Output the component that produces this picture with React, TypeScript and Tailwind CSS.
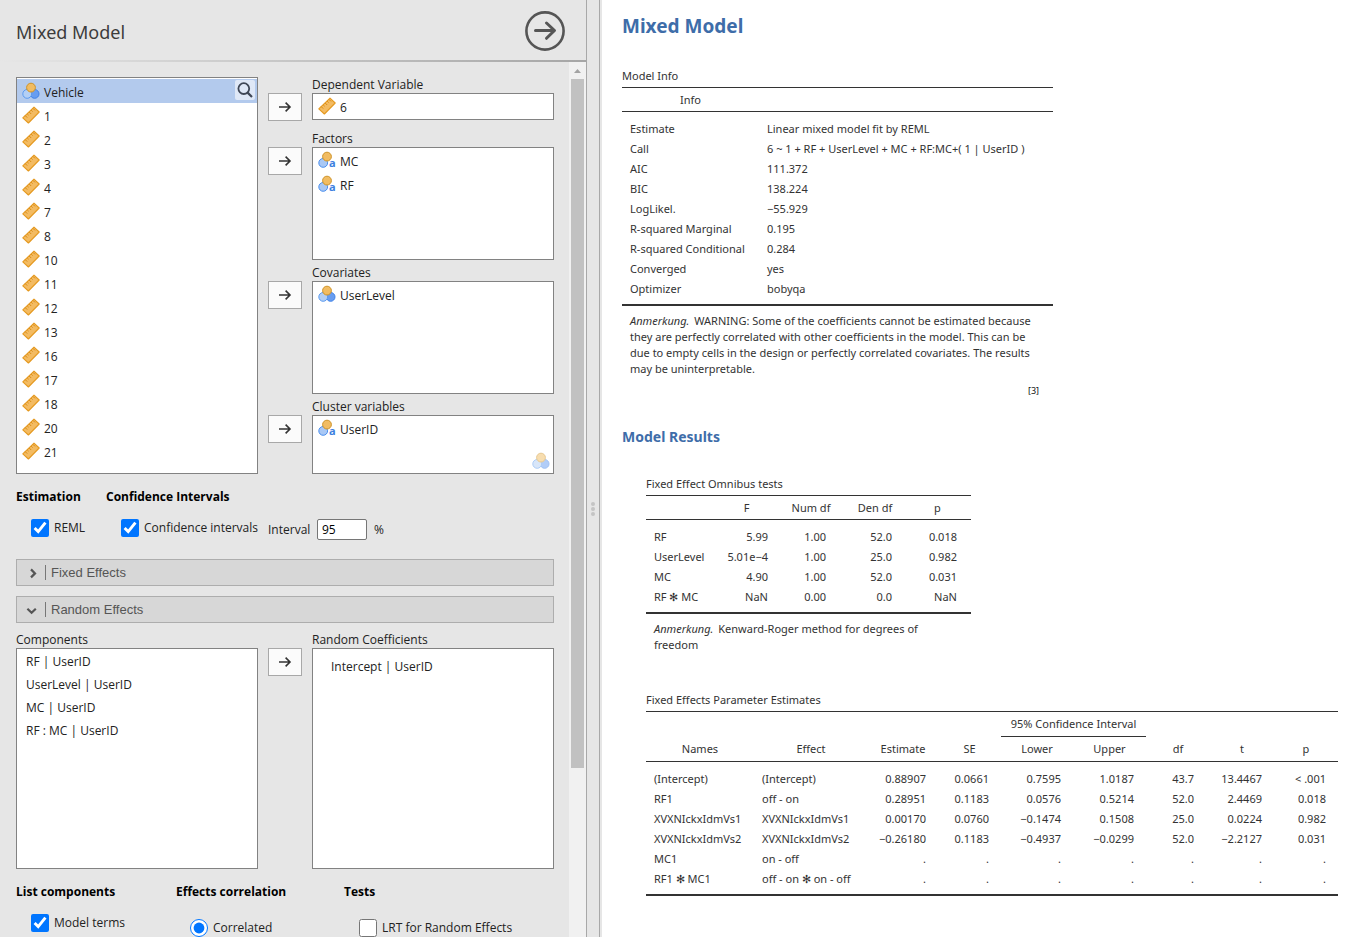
import React from 'react';
import clsx from 'clsx';

type VariableKind = 'continuous' | 'nominal' | 'nominalText';

interface Variable {
  name: string;
  kind: VariableKind;
}

const VARIABLES: Variable[] = [
  { name: 'Vehicle', kind: 'nominal' },
  ...['1', '2', '3', '4', '7', '8', '10', '11', '12', '13', '16', '17', '18', '20', '21'].map(
    (name): Variable => ({ name, kind: 'continuous' }),
  ),
];

const COMPONENTS = ['RF | UserID', 'UserLevel | UserID', 'MC | UserID', 'RF : MC | UserID'];

const MODEL_INFO = [
  ['Estimate', 'Linear mixed model fit by REML'],
  ['Call', '6 ~ 1 + RF + UserLevel + MC + RF:MC+( 1 | UserID )'],
  ['AIC', '111.372'],
  ['BIC', '138.224'],
  ['LogLikel.', '−55.929'],
  ['R-squared Marginal', '0.195'],
  ['R-squared Conditional', '0.284'],
  ['Converged', 'yes'],
  ['Optimizer', 'bobyqa'],
];

const OMNIBUS = [
  ['RF', '5.99', '1.00', '52.0', '0.018'],
  ['UserLevel', '5.01e−4', '1.00', '25.0', '0.982'],
  ['MC', '4.90', '1.00', '52.0', '0.031'],
  ['RF ✻ MC', 'NaN', '0.00', '0.0', 'NaN'],
];

const OMNIBUS_CELLS = ['pl-2', 'pr-2 text-right', 'pr-5 text-right', 'pr-3 text-right', 'pr-3.5 text-right'];

const ESTIMATES = [
  ['(Intercept)', '(Intercept)', '0.88907', '0.0661', '0.7595', '1.0187', '43.7', '13.4467', '< .001'],
  ['RF1', 'off - on', '0.28951', '0.1183', '0.0576', '0.5214', '52.0', '2.4469', '0.018'],
  ['XVXNIckxIdmVs1', 'XVXNIckxIdmVs1', '0.00170', '0.0760', '−0.1474', '0.1508', '25.0', '0.0224', '0.982'],
  ['XVXNIckxIdmVs2', 'XVXNIckxIdmVs2', '−0.26180', '0.1183', '−0.4937', '−0.0299', '52.0', '−2.2127', '0.031'],
  ['MC1', 'on - off', '.', '.', '.', '.', '.', '.', '.'],
  ['RF1 ✻ MC1', 'off - on ✻ on - off', '.', '.', '.', '.', '.', '.', '.'],
];

const ESTIMATE_CELLS = [
  'pl-2',
  'pl-2',
  'pr-3 text-right',
  'pr-3 text-right',
  'pr-3 text-right',
  'pr-3 text-right',
  'pr-4 text-right',
  'pr-3 text-right',
  'pr-3 text-right',
];

const RulerIcon = () => (
  <svg width="18" height="18" viewBox="0 0 18 18" className="shrink-0">
    <path d="M.8 11.8 L12 1.2 L17.2 6 L6.4 17 Z" fill="#f3bb62" stroke="#e5991f" strokeWidth="1.1" strokeLinejoin="round" />
    <path
      d="M3.2 9.6l2 2M5.2 7.8l1.4 1.4M7.2 6l2 2M9.2 4.2l1.4 1.4M11 2.4l2 2"
      stroke="#d98b14"
      strokeWidth="1"
      fill="none"
    />
  </svg>
);

const NominalIcon = ({ faded = false }: { faded?: boolean }) => (
  <svg width="18" height="18" viewBox="0 0 18 18" className={clsx('shrink-0', faded && 'opacity-50')}>
    <circle cx="12.6" cy="11.9" r="4.4" fill="#689df0" stroke="#3f82e8" />
    <circle cx="5.2" cy="11.9" r="4.4" fill="#b3cff5" stroke="#5a9af0" />
    <circle cx="9" cy="5.6" r="4.4" fill="#f1bc62" stroke="#cf9327" />
  </svg>
);

const NominalTextIcon = () => (
  <svg width="18" height="18" viewBox="0 0 18 18" className="shrink-0">
    <circle cx="5.2" cy="11.9" r="4.4" fill="#a9c8f5" stroke="#4a8fee" />
    <circle cx="9" cy="5.6" r="4.4" fill="#f1bc62" stroke="#cf9327" />
    <text x="11" y="16" fontSize="11" fontWeight="700" fontFamily="Open Sans, sans-serif" fill="#3d7fe0">
      a
    </text>
  </svg>
);

const VariableIcon = ({ kind }: { kind: VariableKind }) => {
  if (kind === 'continuous') return <RulerIcon />;
  if (kind === 'nominal') return <NominalIcon />;
  return <NominalTextIcon />;
};

const VariableRow = ({ name, kind, selected = false }: Variable & { selected?: boolean }) => (
  <li className={clsx('flex h-6 items-center gap-1 pl-[5px]', selected && 'bg-[#b3caed]')}>
    <VariableIcon kind={kind} />
    <span className="pt-1 leading-5">{name}</span>
  </li>
);

const AssignButton = ({ label }: { label: string }) => (
  <button
    type="button"
    aria-label={label}
    className="flex h-7 w-[34px] shrink-0 items-center justify-center border border-[#a8a8a8] bg-[#fbfbfb] text-[#333]"
  >
    <svg width="14" height="12" viewBox="0 0 14 12" fill="none" stroke="currentColor" strokeWidth="1.6">
      <path d="M1 6h11M7.6 1.6L12 6l-4.4 4.4" />
    </svg>
  </button>
);

interface TargetProps {
  title: string;
  variables: Variable[];
  boxClass: string;
  hint?: boolean;
}

const Target = ({ title, variables, boxClass, hint }: TargetProps) => (
  <div className="flex gap-[10px]">
    <div className="pt-4">
      <AssignButton label={`Move to ${title}`} />
    </div>
    <div className="min-w-0 flex-1">
      <h3 className="h-4 leading-4">{title}</h3>
      <ul className={clsx('relative border border-[#828282] bg-white', boxClass)}>
        {variables.map((variable) => (
          <VariableRow key={variable.name} {...variable} />
        ))}
        {hint && (
          <li className="absolute right-[3px] bottom-[3px]">
            <NominalIcon faded />
          </li>
        )}
      </ul>
    </div>
  </div>
);

const CheckOption = ({ label, checked = false }: { label: string; checked?: boolean }) => (
  <label className="flex items-center gap-[5px]">
    <input type="checkbox" defaultChecked={checked} className="m-0 size-[18px] accent-[#0075ff]" />
    {label}
  </label>
);

const CollapseBar = ({ title, open = false }: { title: string; open?: boolean }) => (
  <button
    type="button"
    aria-expanded={open}
    className="flex h-[27px] w-full items-center border border-[#adadad] bg-[#d7d7d7] pl-2 font-['Liberation_Sans',Arial,sans-serif] text-[13px] text-[#555]"
  >
    <svg width="14" height="12" viewBox="0 0 14 12" fill="none" stroke="#555" strokeWidth="2.2">
      {open ? <path d="M2.4 4.8l4.2 4L10.8 4.8" /> : <path d="M6 2.4l4 4L6 10.4" />}
    </svg>
    <span className="ml-1.5 h-[15px] border-l border-[#777] pl-[5px] leading-[15px]">{title}</span>
  </button>
);

const OptionsPanel = () => (
  <section className="flex w-[586px] shrink-0 flex-col bg-[#e6e6e6] text-[12px] text-[#222]">
    <header className="flex h-[60px] shrink-0 items-center justify-between pt-0.5 pr-[21px] pl-4">
      <h1 className="pt-0.5 font-['Noto_Sans',sans-serif] text-[18px] text-[#3c3c3c]">Mixed Model</h1>
      <button type="button" aria-label="Hide options" className="text-[#555]">
        <svg width="40" height="40" viewBox="0 0 40 40" fill="none" stroke="currentColor" strokeWidth="2.6">
          <circle cx="20" cy="20" r="18.6" />
          <path d="M10.5 19.5H29M21.5 12l8 7.5-8 7.8" strokeWidth="3" strokeLinecap="round" strokeLinejoin="round" />
        </svg>
      </button>
    </header>
    <div className="h-0.5 shrink-0 bg-linear-to-r from-[#e6e6e6] to-[#a6a6a6]" />

    <div className="flex min-h-0 flex-1">
      <div className="min-w-0 flex-1 overflow-hidden pt-[15px] pr-[15px] pl-4">
        <div className="flex gap-[10px]">
          <div className="relative min-w-0 flex-1 border border-[#828282] bg-white pt-px">
            <ul>
              {VARIABLES.map((variable, i) => (
                <VariableRow key={variable.name} {...variable} selected={i === 0} />
              ))}
            </ul>
            <button
              type="button"
              aria-label="Search variables"
              className="absolute top-0.5 right-0.5 flex size-5 items-center justify-center rounded-xs bg-[#dfe8f7]"
            >
              <svg width="16" height="16" viewBox="0 0 16 16" fill="none" stroke="#3f4756" strokeWidth="1.8">
                <circle cx="6.8" cy="6.6" r="5.4" />
                <path d="M10.6 10.6L15 15" strokeWidth="2.2" />
              </svg>
            </button>
          </div>
          <div className="w-[286px] shrink-0">
            <Target title="Dependent Variable" variables={[{ name: '6', kind: 'continuous' }]} boxClass="h-[27px]" />
            <div className="mt-[10px]">
              <Target
                title="Factors"
                variables={[
                  { name: 'MC', kind: 'nominalText' },
                  { name: 'RF', kind: 'nominalText' },
                ]}
                boxClass="h-[113px]"
              />
            </div>
            <div className="mt-[5px]">
              <Target title="Covariates" variables={[{ name: 'UserLevel', kind: 'nominal' }]} boxClass="h-[113px]" />
            </div>
            <div className="mt-[5px]">
              <Target
                title="Cluster variables"
                variables={[{ name: 'UserID', kind: 'nominalText' }]}
                boxClass="h-[59px]"
                hint
              />
            </div>
          </div>
        </div>

        <div className="mt-[13px] flex">
          <div className="w-[90px]">
            <h3 className="leading-5 font-bold text-black">Estimation</h3>
            <div className="mt-3 pl-[15px]">
              <CheckOption label="REML" checked />
            </div>
          </div>
          <div>
            <h3 className="leading-5 font-bold text-black">Confidence Intervals</h3>
            <div className="mt-3 flex items-start pl-[15px]">
              <div className="w-[147px]">
                <CheckOption label="Confidence intervals" checked />
              </div>
              <label className="flex items-center">
                <span className="w-[49px]">Interval</span>
                <input
                  type="text"
                  defaultValue="95"
                  className="h-[21px] w-[50px] rounded-xs border border-[#767676] bg-white px-1 text-black"
                />
                <span className="ml-[7px]">%</span>
              </label>
            </div>
          </div>
        </div>

        <div className="mt-[19px] flex flex-col gap-[10px]">
          <CollapseBar title="Fixed Effects" />
          <CollapseBar title="Random Effects" open />
        </div>

        <div className="mt-[9px] flex gap-[10px]">
          <div className="min-w-0 flex-1">
            <h3 className="h-4 leading-4">Components</h3>
            <ul className="h-[221px] border border-[#828282] bg-white pt-px pl-[9px]">
              {COMPONENTS.map((component) => (
                <li key={component} className="h-[23px] leading-[23px]">
                  {component}
                </li>
              ))}
            </ul>
          </div>
          <div className="pt-4">
            <AssignButton label="Move to Random Coefficients" />
          </div>
          <div className="min-w-0 flex-1">
            <h3 className="h-4 leading-4">Random Coefficients</h3>
            <ul className="h-[221px] border border-[#828282] bg-white pt-1.5 pl-[18px]">
              <li className="h-[23px] leading-[23px]">Intercept | UserID</li>
            </ul>
          </div>
        </div>

        <div className="mt-[13px] flex">
          <div className="w-40">
            <h3 className="leading-5 font-bold text-black">List components</h3>
            <div className="mt-3 pl-[15px]">
              <CheckOption label="Model terms" checked />
            </div>
          </div>
          <div className="w-[168px]">
            <h3 className="leading-5 font-bold text-black">Effects correlation</h3>
            <label className="mt-[17px] flex items-center gap-[5px] pl-[14px]">
              <input type="radio" name="correlation" defaultChecked className="m-0 size-[18px] accent-[#0075ff]" />
              Correlated
            </label>
          </div>
          <div>
            <h3 className="leading-5 font-bold text-black">Tests</h3>
            <div className="mt-[17px] pl-[15px]">
              <CheckOption label="LRT for Random Effects" />
            </div>
          </div>
        </div>
      </div>

      <div className="flex w-[17px] shrink-0 flex-col items-center bg-[#f1f1f1]">
        <svg width="17" height="17" viewBox="0 0 17 17" className="shrink-0">
          <path d="M5 11l3.5-4 3.5 4z" fill="#a3a3a3" />
        </svg>
        <div className="h-[689px] w-[13px] bg-[#c1c1c1]" />
      </div>
    </div>
  </section>
);

const Splitter = () => (
  <div className="flex w-4 shrink-0 border-r-2 border-[#e6e6e6] bg-[#e6e6e6]">
    <div className="flex flex-1 flex-col items-center justify-center gap-px border-x border-[#a8a8a8] pt-20">
      <span className="size-1 rounded-full bg-[#c4c4c4]" />
      <span className="size-1 rounded-full bg-[#c4c4c4]" />
      <span className="size-1 rounded-full bg-[#c4c4c4]" />
    </div>
  </div>
);

const TABLE = 'table-fixed border-separate border-spacing-0 border-t border-[#333]';
const HEAD_CELL = 'h-6 border-b border-[#333] p-0 text-center font-normal';
const BODY =
  '[&>tr:first-child>td]:pt-[7px] [&>tr:last-child>td]:border-b-2 [&>tr:last-child>td]:border-[#333] [&>tr:last-child>td]:pb-[5px]';

const ResultsPanel = () => (
  <main className="min-w-0 flex-1 overflow-hidden bg-white pl-5 font-['Noto_Sans','Open_Sans',sans-serif] text-[11px] leading-5 text-[#333]">
    <h1 className="pt-3 text-[19px] leading-7 font-bold text-[#3e6da9]">Mixed Model</h1>

    <div className="mt-[26px] w-[431px]">
      <table className={TABLE}>
        <caption className="h-[21px] text-left">Model Info</caption>
        <colgroup>
          <col className="w-[137px]" />
          <col className="w-[294px]" />
        </colgroup>
        <thead>
          <tr>
            <th className={HEAD_CELL}>Info</th>
            <th className={HEAD_CELL} />
          </tr>
        </thead>
        <tbody className={BODY}>
          {MODEL_INFO.map(([name, value]) => (
            <tr key={name}>
              <td className="pl-2">{name}</td>
              <td className="pl-2 whitespace-nowrap">{value}</td>
            </tr>
          ))}
        </tbody>
      </table>
      <p className="px-2 pt-[7px] leading-4">
        <em className="mr-0.5">Anmerkung.</em> WARNING: Some of the coefficients cannot be estimated because they are
        perfectly correlated with other coefficients in the model. This can be due to empty cells in the design or
        perfectly correlated covariates. The results may be uninterpretable.
      </p>
      <p className="mt-1.5 pr-[14px] text-right text-[9px] leading-4 text-[#111]">[3]</p>
    </div>

    <h2 className="mt-7 text-[14px] leading-5 font-bold text-[#3e6da9]">Model Results</h2>

    <div className="mt-[27px] ml-6 w-[325px]">
      <table className={TABLE}>
        <caption className="h-[21px] text-left">Fixed Effect Omnibus tests</caption>
        <colgroup>
          <col className="w-[71px]" />
          <col className="w-[59px]" />
          <col className="w-[70px]" />
          <col className="w-[58px]" />
          <col className="w-[67px]" />
        </colgroup>
        <thead>
          <tr>
            {['', 'F', 'Num df', 'Den df', 'p'].map((title) => (
              <th key={title} className={HEAD_CELL}>
                {title}
              </th>
            ))}
          </tr>
        </thead>
        <tbody className={BODY}>
          {OMNIBUS.map((row) => (
            <tr key={row[0]}>
              {row.map((value, i) => (
                <td key={i} className={clsx('whitespace-nowrap', OMNIBUS_CELLS[i])}>
                  {value}
                </td>
              ))}
            </tr>
          ))}
        </tbody>
      </table>
      <p className="pt-[7px] pr-8 pl-2 leading-4">
        <em className="mr-0.5">Anmerkung.</em> Kenward-Roger method for degrees of freedom
      </p>
    </div>

    <div className="mt-[37px] ml-6">
      <table className={TABLE}>
        <caption className="h-[21px] text-left">Fixed Effects Parameter Estimates</caption>
        <colgroup>
          <col className="w-[108px]" />
          <col className="w-[114px]" />
          <col className="w-[70px]" />
          <col className="w-[63px]" />
          <col className="w-[72px]" />
          <col className="w-[73px]" />
          <col className="w-[64px]" />
          <col className="w-[64px]" />
          <col className="w-[64px]" />
        </colgroup>
        <thead>
          <tr>
            <th colSpan={4} className="p-0" />
            <th colSpan={2} className="h-[25px] border-b border-[#333] p-0 font-normal">
              95% Confidence Interval
            </th>
            <th colSpan={3} className="p-0" />
          </tr>
          <tr>
            {['Names', 'Effect', 'Estimate', 'SE', 'Lower', 'Upper', 'df', 't', 'p'].map((title) => (
              <th key={title} className="h-[25px] border-b border-[#333] p-0 text-center font-normal">
                {title}
              </th>
            ))}
          </tr>
        </thead>
        <tbody className={BODY}>
          {ESTIMATES.map((row) => (
            <tr key={row[0]}>
              {row.map((value, i) => (
                <td key={i} className={clsx('whitespace-nowrap', ESTIMATE_CELLS[i])}>
                  {value}
                </td>
              ))}
            </tr>
          ))}
        </tbody>
      </table>
    </div>
  </main>
);

export default function App() {
  return (
    <div className="flex h-screen overflow-hidden font-['Open_Sans','Noto_Sans',sans-serif]">
      <OptionsPanel />
      <Splitter />
      <ResultsPanel />
    </div>
  );
}
